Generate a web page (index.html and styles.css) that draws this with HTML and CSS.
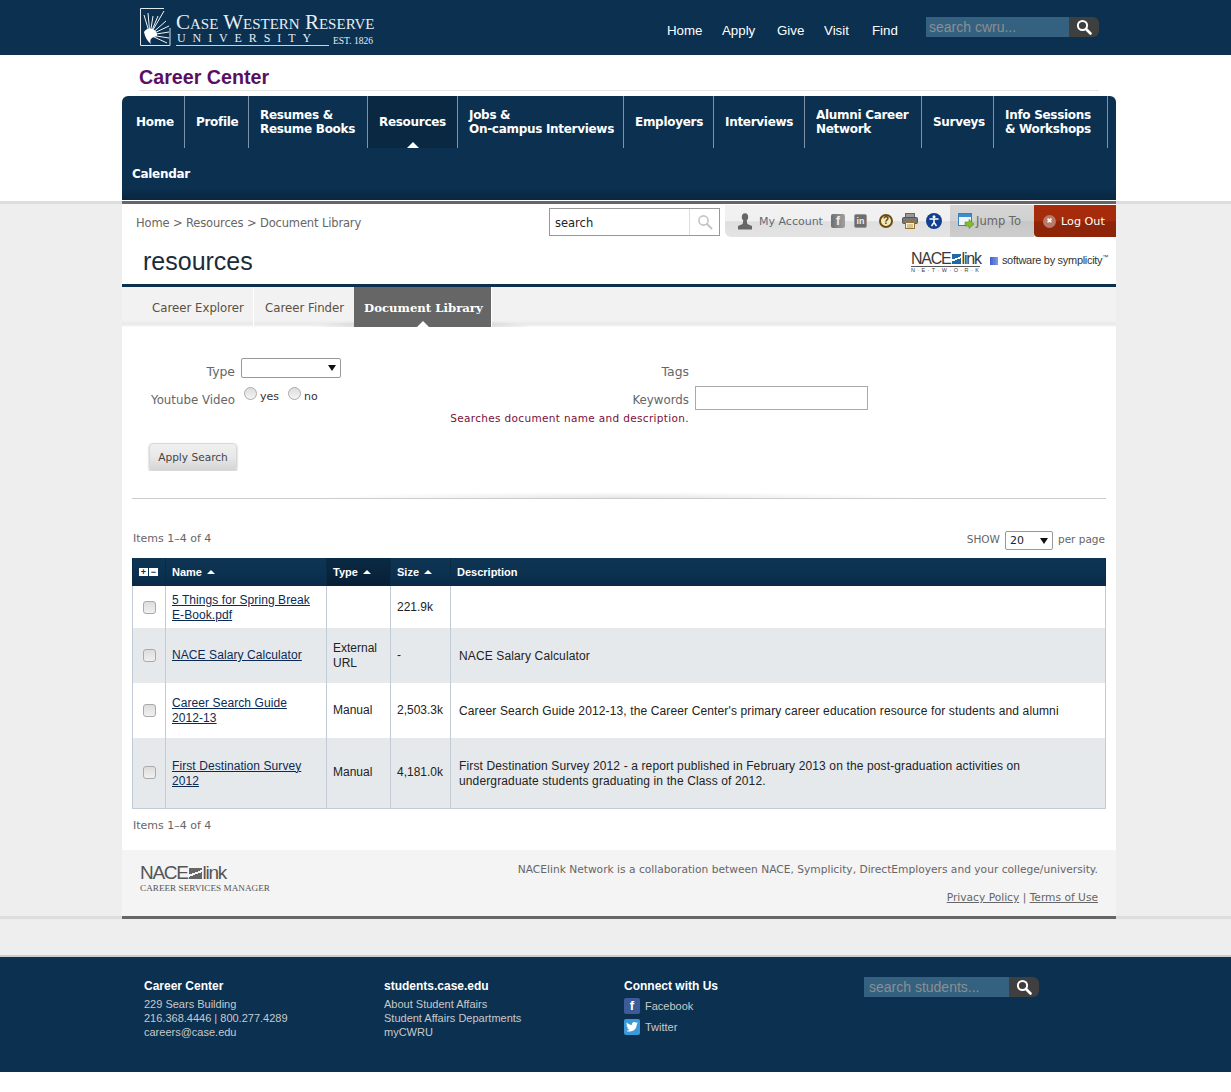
FILE: index.html
```html
<!DOCTYPE html>
<html lang="en">
<head>
  <meta charset="UTF-8" />
  <title>Document Library - Career Center</title>
  <link rel="stylesheet" href="styles.css">
</head>
<body>
  <header class="top-bar">
    <div class="top-inner">
      <a class="cwru-logo" href="#">
        <svg class="sunburst" width="31" height="39" viewBox="0 0 31 39">
          <path d="M30 20V37.500H0.500V0.500H24" fill="none" stroke="#dfe6ec" stroke-width="1"/>
          <path d="M10 27L4 7M10 27L8 5M10 27L13 8M10 27L18 8M10 27L24 3M10 27L26 13M10 27L29 18M10 27L29 24M10 27L29 30M12 28L27 35" stroke="#f2f5f7" stroke-width="1" fill="none"/>
          <path d="M4 24A7 7 0 0 1 17 28C12 29 9 31 11 36C7 33 5 29 4 24Z" fill="#fff"/>
        </svg>
        <span class="logo-words">
          <span class="logo-name">Case Western Reserve</span>
          <span class="logo-sub"><span class="logo-univ">UNIVERSITY</span><span class="logo-est">EST. 1826</span></span>
        </span>
      </a>
      <nav class="top-nav">
        <a href="#">Home</a>
        <a href="#">Apply</a>
        <a href="#">Give</a>
        <a href="#">Visit</a>
        <a href="#">Find</a>
      </nav>
      <form class="site-search">
        <input type="text" placeholder="search cwru..." />
        <button type="button">
          <svg width="16" height="16" viewBox="0 0 16 16"><circle cx="6.500" cy="6.500" r="4.600" fill="none" stroke="#fff" stroke-width="2"/><path d="M10 10l4.500 4.500" stroke="#fff" stroke-width="2.600" stroke-linecap="round"/></svg>
        </button>
      </form>
    </div>
  </header>

  <div class="title-band">
    <div class="band-inner">
      <h1 class="center-name">Career Center</h1>
      <nav class="main-nav">
        <a href="#" class="first">Home</a>
        <a href="#">Profile</a>
        <a href="#">Resumes &amp;<br>Resume Books</a>
        <a href="#" class="active">Resources</a>
        <a href="#">Jobs &amp;<br>On-campus Interviews</a>
        <a href="#">Employers</a>
        <a href="#">Interviews</a>
        <a href="#">Alumni Career<br>Network</a>
        <a href="#">Surveys</a>
        <a href="#">Info Sessions<br>&amp; Workshops</a>
        <a href="#" class="second-row">Calendar</a>
      </nav>
    </div>
  </div>

  <div class="page-rule"><div class="page-rule-dark"></div></div>

  <div class="page">
    <div class="util-bar">
      <div class="crumbs">Home &gt; Resources &gt; Document Library</div>
      <div class="util-search">
        <input type="text" value="search" />
        <span class="util-search-btn">
          <svg width="16" height="16" viewBox="0 0 16 16"><circle cx="6.500" cy="6.500" r="4.600" fill="none" stroke="#c4c4c4" stroke-width="1.600"/><path d="M10 10l4.500 4.500" stroke="#c4c4c4" stroke-width="2" stroke-linecap="round"/></svg>
        </span>
      </div>
      <div class="util-tools">
        <svg class="tool-user" width="16" height="17" viewBox="0 0 16 17"><ellipse cx="8" cy="4" rx="3.200" ry="3.800" fill="#666"/><path d="M6.300 7h3.400l.6 4 4.700 2v3.500H1V13l4.700-2z" fill="#666"/></svg>
        <span class="account-link">My Account</span>
        <span class="tool-square"><span>f</span></span>
        <span class="tool-square tool-in"><span>in</span></span>
        <span class="tool-help">?</span>
        <svg class="tool-print" width="16" height="16" viewBox="0 0 16 16"><rect x="3.500" y="0.500" width="9" height="4" fill="#999" stroke="#666"/><rect x="0.500" y="4.500" width="15" height="6" rx="1" fill="#777" stroke="#555"/><rect x="3.500" y="9.500" width="9" height="6" fill="#f6efd8" stroke="#9a7326"/><path d="M5 12h6M5 14h6" stroke="#b59a5a"/></svg>
        <svg class="tool-access" width="16" height="16" viewBox="0 0 16 16"><circle cx="8" cy="8" r="8" fill="#12408f"/><circle cx="8" cy="3.800" r="1.500" fill="#fff"/><path d="M3.500 6h9M8 6v3.500M8 9.500L5.500 13M8 9.500l2.500 3.500" stroke="#fff" stroke-width="1.500" fill="none"/></svg>
      </div>
      <div class="util-jump">
        <svg width="17" height="16" viewBox="0 0 17 16"><rect x="0.500" y="0.500" width="13" height="12" fill="#eef5fb" stroke="#3a7fc0"/><rect x="1" y="1" width="12" height="3" fill="#3f8bd0"/><path d="M7 9h4V6.500L16 11l-5 4.500V13H7z" fill="#7fbf2e" stroke="#4f8a18" stroke-width="0.600"/></svg>
        <span>Jump To</span>
      </div>
      <div class="util-logout">
        <span class="logout-x">&#10006;</span>
        <span>Log Out</span>
      </div>
    </div>

    <div class="title-row">
      <h2 class="section-title">resources</h2>
      <div class="brands">
        <div class="nace-mark">
          <div class="nace-word">NACE<span class="nace-box"></span>link</div>
          <div class="nace-network">N·E·T·W·O·R·K</div>
        </div>
        <span class="sym-square"></span>
        <span class="sym-text">software by symplicity<sup>™</sup></span>
      </div>
    </div>

    <div class="tabs">
      <a href="#" class="tab">Career Explorer</a>
      <a href="#" class="tab tab-finder">Career Finder</a>
      <a href="#" class="tab tab-active">Document Library</a>
    </div>

    <div class="content">
      <form class="search-form">
        <div class="form-left">
          <div class="form-row form-row-type">
            <label>Type</label>
            <span class="select-wrap select-type"><select></select></span>
          </div>
          <div class="form-row form-row-yt">
            <label>Youtube Video</label>
            <span class="radio-set">
              <input type="radio" name="yt" /><span class="radio-text">yes</span>
              <input type="radio" name="yt" /><span class="radio-text">no</span>
            </span>
          </div>
        </div>
        <div class="form-right">
          <div class="form-row form-row-type">
            <label>Tags</label>
          </div>
          <div class="form-row form-row-kw">
            <label>Keywords</label>
            <input type="text" class="kw-input" />
          </div>
          <div class="form-hint">Searches document name and description.</div>
        </div>
      </form>
      <button type="button" class="apply-btn">Apply Search</button>
      <div class="divider"></div>

      <div class="list-top">
        <span class="items-count">Items 1–4 of 4</span>
        <span class="per-page">
          <span>SHOW</span>
          <span class="select-wrap select-show"><select><option>20</option></select></span>
          <span>per page</span>
        </span>
      </div>

      <table class="docs">
        <thead>
          <tr>
            <th class="col-check"><span class="pm">+</span><span class="pm">−</span></th>
            <th class="col-name">Name <span class="sort"></span></th>
            <th class="col-type sorted">Type <span class="sort"></span></th>
            <th class="col-size">Size <span class="sort"></span></th>
            <th class="col-desc">Description</th>
          </tr>
        </thead>
        <tbody>
          <tr class="row-a">
            <td class="cell-check"><input type="checkbox" /></td>
            <td class="cell-name"><a href="#">5 Things for Spring Break<br>E-Book.pdf</a></td>
            <td></td>
            <td>221.9k</td>
            <td></td>
          </tr>
          <tr class="row-b alt">
            <td class="cell-check"><input type="checkbox" /></td>
            <td class="cell-name"><a href="#">NACE Salary Calculator</a></td>
            <td>External URL</td>
            <td>-</td>
            <td class="cell-desc">NACE Salary Calculator</td>
          </tr>
          <tr class="row-c">
            <td class="cell-check"><input type="checkbox" /></td>
            <td class="cell-name"><a href="#">Career Search Guide<br>2012-13</a></td>
            <td>Manual</td>
            <td>2,503.3k</td>
            <td class="cell-desc">Career Search Guide 2012-13, the Career Center's primary career education resource for students and alumni</td>
          </tr>
          <tr class="row-d alt">
            <td class="cell-check"><input type="checkbox" /></td>
            <td class="cell-name"><a href="#">First Destination Survey<br>2012</a></td>
            <td>Manual</td>
            <td>4,181.0k</td>
            <td class="cell-desc">First Destination Survey 2012 - a report published in February 2013 on the post-graduation activities on<br>undergraduate students graduating in the Class of 2012.</td>
          </tr>
        </tbody>
      </table>

      <div class="items-count items-bottom">Items 1–4 of 4</div>
    </div>

    <div class="page-foot">
      <div class="foot-logo">
        <div class="foot-nace">NACE<span class="foot-box"></span>link</div>
        <div class="foot-csm">CAREER SERVICES MANAGER</div>
      </div>
      <div class="foot-right">
        <p>NACElink Network is a collaboration between NACE, Symplicity, DirectEmployers and your college/university.</p>
        <p class="foot-links"><a href="#">Privacy Policy</a> | <a href="#">Terms of Use</a></p>
      </div>
    </div>
  </div>
  <div class="page-end"><div class="page-end-dark"></div></div>

  <footer class="site-foot">
    <div class="foot-cols">
      <div class="foot-col">
        <h4>Career Center</h4>
        <p>229 Sears Building</p>
        <p>216.368.4446 | 800.277.4289</p>
        <p>careers@case.edu</p>
      </div>
      <div class="foot-col">
        <h4>students.case.edu</h4>
        <p>About Student Affairs</p>
        <p>Student Affairs Departments</p>
        <p>myCWRU</p>
      </div>
      <div class="foot-col">
        <h4>Connect with Us</h4>
        <div class="social social-first"><span class="social-icon fb">f</span>Facebook</div>
        <div class="social"><span class="social-icon tw">
          <svg width="12" height="10" viewBox="0 0 24 20"><path d="M24 2.400c-.9.400-1.800.700-2.800.800 1-.6 1.800-1.600 2.200-2.700-1 .6-2 1-3.100 1.200C19.400.700 18.100 0 16.600 0c-2.700 0-4.900 2.200-4.900 4.900 0 .4 0 .8.100 1.100C7.700 5.800 4.100 3.900 1.700.9c-.4.700-.7 1.600-.7 2.500 0 1.700.9 3.200 2.200 4.100-.8 0-1.600-.2-2.200-.6v.1c0 2.400 1.700 4.400 3.900 4.800-.7.200-1.500.2-2.200.1.600 2 2.400 3.400 4.600 3.400-1.700 1.300-3.800 2.100-6.100 2.100-.4 0-.8 0-1.200-.1C2.200 18.300 4.800 19.100 7.500 19.100c9.100 0 14-7.500 14-14v-.6c1-.7 1.800-1.500 2.500-2.100z" fill="#fff"/></svg>
        </span>Twitter</div>
      </div>
      <form class="site-search foot-search">
        <input type="text" placeholder="search students..." />
        <button type="button">
          <svg width="16" height="16" viewBox="0 0 16 16"><circle cx="6.500" cy="6.500" r="4.600" fill="none" stroke="#fff" stroke-width="2"/><path d="M10 10l4.500 4.500" stroke="#fff" stroke-width="2.600" stroke-linecap="round"/></svg>
        </button>
      </form>
    </div>
  </footer>
</body>
</html>
```
FILE: styles.css
```css
* {
  box-sizing: border-box;
}
html {
  background: #fff;
}
body {
  margin: 0;
  height: 1092px;
  background: linear-gradient(#fff 0, #fff 201px, #eee 201px, #eee 956px, #fff 956px);
  font-family: "DejaVu Sans", Verdana, sans-serif;
  font-size: 12px;
  color: #666;
}
a {
  color: inherit;
  text-decoration: none;
}
h1, h2, h4, p {
  margin: 0;
}

/* top bar */
.top-bar {
  height: 55px;
  background: #0b3050;
}
.top-inner {
  width: 1231px;
  height: 55px;
  display: flex;
  align-items: flex-start;
  padding-left: 140px;
}
.cwru-logo {
  display: flex;
  margin-top: 8px;
  width: 350px;
  color: #e9eef2;
  font-family: "Liberation Serif", serif;
}
.sunburst {
  flex: none;
}
.logo-words {
  margin-left: 5px;
  width: 200px;
}
.logo-name {
  display: block;
  font-size: 21px;
  line-height: 18px;
  margin-top: 5px;
  font-variant: small-caps;
  white-space: nowrap;
}
.logo-sub {
  display: flex;
  align-items: flex-end;
  white-space: nowrap;
}
.logo-univ {
  width: 153px;
  font-size: 12px;
  line-height: 14px;
  letter-spacing: 6.900px;
  border-bottom: 1px solid #c9d3dc;
  padding-left: 1px;
  overflow: hidden;
}
.logo-est {
  margin-left: 4px;
  font-size: 9.500px;
  line-height: 10px;
}
.top-nav {
  display: flex;
  margin-left: 177px;
  margin-top: 23px;
  font-family: "Liberation Sans", Arial, sans-serif;
  font-size: 13.300px;
  line-height: 16px;
  color: #fff;
}
.top-nav a:nth-child(1) { width: 55px; }
.top-nav a:nth-child(2) { width: 55px; }
.top-nav a:nth-child(3) { width: 47px; }
.top-nav a:nth-child(4) { width: 48px; }
.top-nav a:nth-child(5) { width: 54px; }
.site-search {
  display: flex;
  margin-top: 17px;
  margin-left: 0;
}
.site-search input {
  width: 143px;
  height: 20px;
  border: 0;
  padding: 0 3px;
  background: #34617f;
  font-family: "Liberation Sans", Arial, sans-serif;
  font-size: 14px;
  color: #fff;
}
.site-search input::placeholder {
  color: #8b8f92;
  opacity: 1;
}
.site-search button {
  width: 30px;
  height: 20px;
  border: 0;
  padding: 0;
  border-radius: 0 6px 6px 0;
  background: #3f3f3f;
  display: flex;
  align-items: center;
  justify-content: center;
}

/* career center + main nav */
.title-band {
  height: 145px;
  background: #fff;
}
.band-inner {
  width: 994px;
  margin-left: 122px;
}
.center-name {
  margin: 0 17px 0 17px;
  height: 36px;
  padding-top: 11px;
  border-bottom: 1px solid #e5e5e5;
  font-family: "Liberation Sans", Arial, sans-serif;
  font-size: 19.700px;
  line-height: 22px;
  font-weight: bold;
  color: #5a0f63;
}
.main-nav {
  display: grid;
  grid-template-columns: 63px 64px 119px 90px 166px 90px 91px 117px 72px 114px;
  grid-template-rows: 52px 52px;
  height: 104px;
  margin-top: 5px;
  border-radius: 6px 6px 0 0;
  background: linear-gradient(#0b3050 0, #0b3050 92px, #082640 104px);
  font-size: 12px;
  letter-spacing: -0.300px;
  line-height: 14px;
  font-weight: bold;
  color: #fff;
}
.main-nav a {
  display: flex;
  align-items: center;
  padding: 0 0 0 11px;
  border-right: 1px solid #7f93a5;
  white-space: nowrap;
  position: relative;
}
.main-nav a.first {
  padding-left: 14px;
}
.main-nav a.second-row {
  grid-row: 2;
  grid-column: 1 / 3;
  padding-left: 10px;
  border-right: 0;
}
.main-nav a.active {
  background: #0a2842;
}
.main-nav a.active::after {
  content: "";
  position: absolute;
  left: 39px;
  bottom: 0;
  border: 6px solid transparent;
  border-top: 0;
  border-bottom-color: #fff;
}

.page-rule {
  height: 4px;
  border-top: 1px solid #fff;
  background: #ddd;
}
.page-rule-dark {
  width: 994px;
  height: 3px;
  margin: 0 0 0 122px;
  background: #666;
}

/* page body */
.page {
  width: 994px;
  margin-left: 122px;
  background: #fff;
}
.util-bar {
  display: flex;
  height: 33px;
}
.crumbs {
  width: 427px;
  padding: 12px 0 0 14px;
  font-size: 11.500px;
  letter-spacing: -0.140px;
  line-height: 14px;
}
.util-search {
  display: flex;
  width: 171px;
  height: 28px;
  margin-top: 4px;
  border: 1px solid #999;
  background: #fff;
}
.util-search input {
  width: 140px;
  border: 0;
  border-right: 1px solid #ddd;
  padding: 2px 6px 0 5px;
  font-family: "DejaVu Sans", Verdana, sans-serif;
  font-size: 11.500px;
  color: #222;
  background: #fff;
}
.util-search-btn {
  flex: 1;
  display: flex;
  align-items: center;
  justify-content: center;
}
.util-tools {
  display: flex;
  align-items: center;
  width: 225px;
  margin: 1px 0 0 5px;
  padding-left: 12px;
  border-radius: 0 0 0 6px;
  background: linear-gradient(#f2f2f2, #f0f0f0 50%, #dfdfdf 52%, #e4e4e4);
  font-size: 11px;
  color: #5e6a78;
}
.account-link {
  margin-left: 6px;
  width: 72px;
  white-space: nowrap;
}
.tool-square {
  display: flex;
  width: 14px;
  height: 14px;
  margin-right: 9px;
  border-radius: 2px;
  background: linear-gradient(90deg, #6f6f6f, #a0a0a0);
  align-items: center;
  justify-content: center;
  font: bold 12px "Liberation Sans", Arial, sans-serif;
  color: #eee;
  overflow: hidden;
}
.tool-in {
  width: 13px;
  background: #6d6d6d;
  border: 1px solid #999;
  font-size: 9px;
  margin-right: 12px;
}
.tool-help {
  width: 14px;
  height: 14px;
  margin-right: 9px;
  border-radius: 50%;
  border: 2px solid #6b4d12;
  background: #f8e9b8;
  text-align: center;
  font: bold 10px/10px "Liberation Sans", Arial, sans-serif;
  color: #5a3d08;
}
.tool-print {
  margin-right: 8px;
}
.util-jump {
  display: flex;
  align-items: center;
  width: 84px;
  margin-top: 1px;
  padding-left: 8px;
  gap: 1px;
  background: linear-gradient(#d6d6d6, #d0d0d0 50%, #c6c6c6 52%, #cecece);
  font-size: 11.500px;
  white-space: nowrap;
}
.util-logout {
  display: flex;
  align-items: center;
  flex: 1;
  margin-top: 1px;
  padding-left: 9px;
  gap: 5px;
  background: linear-gradient(#a62b0b, #a62b0b 50%, #8f2508 52%, #8f2508);
  border-radius: 0 0 0 4px;
  color: #fff;
  font-size: 11.200px;
  white-space: nowrap;
}
.logout-x {
  width: 13px;
  height: 13px;
  border-radius: 50%;
  background: #b9786a;
  text-align: center;
  font-size: 7px;
  line-height: 13px;
}
.title-row {
  display: flex;
  height: 50px;
  justify-content: space-between;
  border-bottom: 3px solid #0b3050;
}
.section-title {
  margin: 9px 0 0 21px;
  font-family: "Liberation Sans", Arial, sans-serif;
  font-size: 25px;
  line-height: 30px;
  font-weight: normal;
  color: #1b2b38;
}
.brands {
  display: flex;
  align-items: flex-start;
  padding-top: 14px;
  padding-right: 8px;
}
.nace-mark {
  flex: none;
  width: 69px;
  color: #3a3a3a;
  font-family: "Liberation Sans", Arial, sans-serif;
}
.nace-word {
  font-size: 16px;
  line-height: 15px;
  letter-spacing: -1.200px;
  white-space: nowrap;
}
.nace-box {
  display: inline-block;
  width: 9px;
  height: 10px;
  margin: 0 1px;
  background: linear-gradient(160deg, #1e6aa8 42%, #fff 42%, #fff 56%, #1e6aa8 56%);
}
.nace-network {
  font-size: 5.500px;
  line-height: 7px;
  letter-spacing: 2.400px;
  white-space: nowrap;
  overflow: hidden;
  border-top: 1px solid #555;
}
.sym-square {
  flex: none;
  width: 8px;
  height: 8px;
  margin: 6px 4px 0 10px;
  background: linear-gradient(90deg, #3f5fd0, #7f9be0);
}
.sym-text {
  margin-top: 2px;
  font-family: "Liberation Sans", sans-serif;
  font-size: 11px;
  letter-spacing: -0.300px;
  line-height: 14px;
  color: #333;
  white-space: nowrap;
}
.sym-text sup {
  font-size: 6px;
  line-height: 0;
}

.tabs {
  display: flex;
  height: 40px;
  background:
    radial-gradient(ellipse 110px 8px at 301px 100%, #bbb, transparent),
    linear-gradient(#f2f2f2 0, #f2f2f2 33px, #e9e9e9 37px, #fafafa 40px);
}
.tab {
  padding-top: 14px;
  padding-left: 30px;
  width: 132px;
  border-right: 1px solid #fff;
  font-size: 11.750px;
  line-height: 14px;
  color: #5c5040;
  white-space: nowrap;
}
.tab-finder {
  width: 100px;
  padding-left: 11px;
  border-right: 0;
}
.tab-active {
  position: relative;
  width: 138px;
  padding-left: 10px;
  background: #666;
  color: #fff;
  font-family: "DejaVu Serif", serif;
  font-weight: bold;
  font-size: 11.700px;
}
.tab-active::after {
  content: "";
  position: absolute;
  left: 63px;
  bottom: 0;
  border: 6px solid transparent;
  border-top: 0;
  border-bottom-color: #fff;
}

/* filter form */
.content {
  height: 523px;
  padding: 0 10px;
  background: #fff;
}
.search-form {
  display: flex;
  padding-top: 31px;
  height: 116px;
}
.form-left {
  width: 339px;
}
.form-right {
  width: 400px;
}
.form-row {
  display: flex;
}
.form-row label {
  flex: none;
  text-align: right;
  font-size: 11.800px;
  line-height: 14px;
  color: #666;
}
.form-row-type label {
  font-size: 12.400px;
}
.form-left label {
  width: 103px;
}
.form-right label {
  width: 218px;
}
.form-row-type {
  height: 28px;
  padding-top: 7px;
}
.form-row-type .select-wrap {
  margin-top: -7px;
}
.form-row-yt {
  height: 24px;
  padding-top: 7px;
}
.select-wrap {
  position: relative;
  display: inline-block;
  margin-left: 6px;
}
.select-wrap select {
  display: block;
  appearance: none;
  background: #fff;
  border: 1px solid #999;
  border-radius: 2px;
  font-family: "DejaVu Sans", Verdana, sans-serif;
  font-size: 11px;
  color: #222;
  padding: 0 4px;
}
.select-wrap::after {
  content: "";
  position: absolute;
  right: 5px;
  top: 7px;
  border: 4px solid transparent;
  border-bottom: 0;
  border-top: 6px solid #111;
}
.select-type select {
  width: 100px;
  height: 20px;
}
.select-show {
  margin: 0 5px;
}
.select-show select {
  width: 48px;
  height: 19px;
}
.radio-set {
  display: flex;
  align-items: flex-start;
  margin-top: -6px;
  margin-left: 9px;
}
.radio-set input {
  appearance: none;
  width: 13px;
  height: 13px;
  margin: 0 3px 0 0;
  border: 1px solid #aaa;
  border-radius: 50%;
  background: linear-gradient(#ddd, #f4f4f4);
}
.radio-text {
  margin-top: 3px;
  width: 28px;
  font-size: 11px;
  line-height: 14px;
  color: #333;
}
.form-row-kw {
  height: 24px;
  padding-top: 7px;
}
.kw-input {
  width: 173px;
  height: 24px;
  margin: -7px 0 0 6px;
  border: 1px solid #aaa;
  background: #fff;
}
.form-hint {
  display: flex;
  justify-content: flex-end;
  width: 218px;
  margin-top: 1px;
  font-size: 10.500px;
  line-height: 14px;
  letter-spacing: 0.340px;
  color: #7a1038;
  white-space: nowrap;
}
.apply-btn {
  display: block;
  width: 88px;
  height: 28px;
  margin-left: 17px;
  border: 1px solid #d8d8d8;
  border-radius: 4px;
  background: linear-gradient(#f0f0f0, #e8e8e8 50%, #d4d4d4);
  box-shadow: 0 1px 2px #aaa;
  font-family: "DejaVu Sans", Verdana, sans-serif;
  font-size: 10.600px;
  color: #444;
  padding: 0;
}
.divider {
  height: 28px;
  border-bottom: 1px solid #ccc;
  background: radial-gradient(ellipse 300px 6px at 50% 100%, #e6e6e6, #fff);
}
.list-top {
  display: flex;
  justify-content: space-between;
  height: 59px;
  padding: 33px 1px 0 1px;
  font-size: 10.500px;
  line-height: 14px;
}
.list-top .items-count {
  font-size: 11px;
}
.per-page {
  display: flex;
  align-items: flex-start;
  margin-top: -1px;
}
.per-page span:first-child,
.per-page span:last-child {
  margin-top: 1px;
}

/* document table */
.docs {
  width: 974px;
  table-layout: fixed;
  border-collapse: collapse;
  font-family: "Liberation Sans", Arial, sans-serif;
  font-size: 12px;
  line-height: 15px;
  color: #222;
}
.docs th {
  height: 28px;
  padding: 0 0 0 6px;
  border-left: 1px solid #0a2a46;
  border-right: 1px solid #0a2a46;
  text-align: left;
  color: #fff;
  font-size: 11px;
  background: linear-gradient(#0f3554, #0b3050 60%, #0a2a46);
}
.docs th.sorted {
  background: linear-gradient(#0a2a44, #081f36);
}
.col-check { width: 33px; }
.col-name { width: 161px; }
.col-type { width: 64px; }
.col-size { width: 60px; }
.docs th.col-check {
  padding: 0 0 2px 6px;
}
.pm {
  display: inline-block;
  width: 9px;
  height: 8px;
  margin-right: 1px;
  background: #fff;
  color: #0b3050;
  font-size: 9px;
  line-height: 8px;
  text-align: center;
  vertical-align: middle;
}
.sort {
  display: inline-block;
  margin-left: 2px;
  vertical-align: 2px;
  border: 4px solid transparent;
  border-top: 0;
  border-bottom-color: #fff;
}
.docs td {
  padding: 0 0 0 6px;
  border: 1px solid #c3ccd6;
  border-top: 0;
  border-bottom: 0;
  vertical-align: middle;
}
.docs tbody tr:last-child td {
  border-bottom: 1px solid #c3ccd6;
}
.alt td {
  background: #e6e9ec;
}
.row-a { height: 42px; }
.row-b { height: 55px; }
.row-c { height: 55px; }
.row-d { height: 70px; }
.cell-name a {
  color: #0b2a55;
  text-decoration: underline;
  letter-spacing: 0.080px;
}
.row-a .cell-name,
.row-d .cell-name {
  padding-top: 2px;
}
.docs .cell-desc {
  padding: 2px 0 0 8px;
  letter-spacing: 0.130px;
}
.docs .cell-check {
  padding-left: 10px;
}
.cell-check input {
  appearance: none;
  display: block;
  width: 13px;
  height: 13px;
  margin: 0;
  border: 1px solid #aaa;
  border-radius: 3px;
  background: linear-gradient(#ddd, #f0f0f0);
}
.items-count {
  font-size: 11px;
  line-height: 14px;
  color: #666;
}
.items-bottom {
  margin: 10px 0 0 1px;
}

/* page footer */
.page-foot {
  display: flex;
  justify-content: space-between;
  height: 66px;
  padding: 14px 18px 0 18px;
  background: #f4f4f4;
}
.foot-logo {
  color: #555;
  font-family: "Liberation Sans", Arial, sans-serif;
}
.foot-nace {
  font-size: 19px;
  line-height: 18px;
  letter-spacing: -1.300px;
  white-space: nowrap;
}
.foot-box {
  display: inline-block;
  width: 13px;
  height: 11px;
  margin: 0 1px;
  background: linear-gradient(160deg, #666 42%, #f4f4f4 42%, #f4f4f4 56%, #666 56%);
}
.foot-csm {
  margin-top: 1px;
  font-family: "Liberation Serif", serif;
  font-size: 9.200px;
  line-height: 10px;
  white-space: nowrap;
}
.foot-right {
  text-align: right;
  font-size: 10.670px;
  line-height: 14px;
  margin-top: -1px;
}
.foot-links {
  margin-top: 14px;
}
.foot-links a {
  text-decoration: underline;
}
.page-end {
  height: 3px;
  background: #ddd;
}
.page-end-dark {
  width: 994px;
  height: 3px;
  margin-left: 122px;
  background: #666;
}

/* site footer */
.site-foot {
  height: 117px;
  margin-top: 36px;
  border-top: 2px solid #ccc;
  background: #0b3050;
  font-family: "Liberation Sans", Arial, sans-serif;
  font-size: 11px;
  line-height: 14px;
  color: #c9c9c9;
}
.foot-cols {
  display: grid;
  grid-template-columns: 240px 240px 240px 180px;
  padding: 21px 0 0 144px;
}
.foot-col h4 {
  margin-bottom: 3px;
  font-size: 12px;
  line-height: 16px;
  color: #fff;
}
.social {
  display: flex;
  align-items: center;
  height: 21px;
}
.social-first {
  margin-top: -2px;
}
.social-icon {
  display: flex;
  align-items: center;
  justify-content: center;
  width: 16px;
  height: 16px;
  margin-right: 5px;
  border-radius: 2px;
  color: #fff;
  font-weight: bold;
  font-size: 13px;
}
.fb {
  background: #3b5b99;
}
.tw {
  background: #3a9ad9;
}
.foot-search {
  margin: -1px 0 0 0;
}
.foot-search input {
  width: 145px;
  padding: 0 5px;
}
```
